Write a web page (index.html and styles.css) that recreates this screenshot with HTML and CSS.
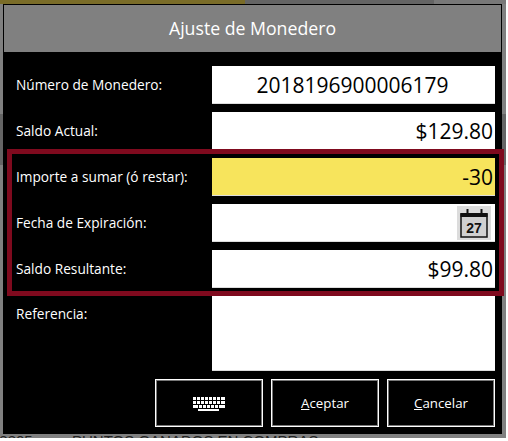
FILE: index.html
```html
<!DOCTYPE html>
<html lang="es">
<head>
  <meta charset="UTF-8" />
  <title>Ajuste de Monedero</title>
  <link rel="stylesheet" href="styles.css">
</head>
<body>
  <div class="screen">
    <div class="top-strip">
      <div class="strip-olive"></div>
      <div class="strip-dark"></div>
      <div class="strip-gray"></div>
    </div>

    <div class="dialog">
      <div class="title">Ajuste de Monedero</div>
      <div class="content">
        <div class="form">
          <label>Número de Monedero:</label>
          <div class="field center">2018196900006179</div>

          <label>Saldo Actual:</label>
          <div class="field">$129.80</div>

          <label>Importe a sumar (ó restar):</label>
          <div class="field yellow">-30</div>

          <label>Fecha de Expiración:</label>
          <div class="field">
            <svg class="calendar" width="34" height="34" viewBox="0 0 34 34">
              <rect width="34" height="34" fill="#dcdcdc"/>
              <rect x="4" y="8" width="26" height="23" fill="#d0d0d0" stroke="#111" stroke-width="1.5"/>
              <rect x="3.5" y="7" width="27" height="4" fill="#111"/>
              <rect x="9.5" y="3" width="2" height="7" fill="#111"/>
              <rect x="23.5" y="3" width="2" height="7" fill="#111"/>
              <text x="17" y="27" text-anchor="middle" class="calendar-day">27</text>
            </svg>
          </div>

          <label>Saldo Resultante:</label>
          <div class="field">$99.80</div>

          <label class="top">Referencia:</label>
          <div class="field notes"></div>
        </div>

        <div class="buttons">
          <button class="btn">
            <svg width="32" height="14" viewBox="0 0 32 14" fill="#fff">
              <path d="M0 0h3v3H0zM4 0h3v3H4zM8 0h3v3H8zM12 0h3v3h-3zM16 0h3v3h-3zM20 0h3v3h-3zM24 0h3v3h-3zM28 0h4v3h-4z"/>
              <path d="M0 4h3v3H0zM4 4h3v3H4zM8 4h3v3H8zM12 4h3v3h-3zM16 4h3v3h-3zM20 4h3v3h-3zM24 4h3v3h-3zM28 4h4v3h-4z"/>
              <path d="M0 8h5v3H0zM6 8h3v3H6zM10 8h3v3h-3zM14 8h3v3h-3zM18 8h3v3h-3zM22 8h3v3h-3zM26 8h6v3h-6z"/>
              <path d="M5 12h21v2H5z"/>
            </svg>
          </button>
          <button class="btn"><u>A</u>ceptar</button>
          <button class="btn"><u>C</u>ancelar</button>
        </div>
      </div>
    </div>

    <div class="behind">
      <span class="behind-code">48805</span>
      <span>PUNTOS GANADOS EN COMPRAS</span>
    </div>

    <div class="highlight"></div>
  </div>
</body>
</html>
```

FILE: styles.css
```css
* {
  margin: 0;
  padding: 0;
  box-sizing: border-box;
}
body {
  background: #fff;
  font-family: 'Open Sans', sans-serif;
}
.screen {
  position: relative;
  width: 506px;
  height: 438px;
  background: linear-gradient(to bottom, #808080 114px, #656565 114px, #656565 165px, #808080 165px);
  overflow: hidden;
}

/* what shows behind the dialog */
.top-strip {
  display: flex;
  height: 4px;
}
.strip-olive {
  width: 245px;
  background: #7a6c28;
}
.strip-dark {
  width: 189px;
  background: #646464;
}
.strip-gray {
  flex: 1;
  background: #787878;
}
.behind {
  display: flex;
  height: 4px;
  font-family: 'Liberation Sans', sans-serif;
  font-size: 15px;
  line-height: 14px;
  color: #222;
  white-space: nowrap;
}
.behind-code {
  width: 81px;
  margin-left: -9px;
}

.dialog {
  width: 499px;
  height: 430px;
  margin-left: 3px;
  border-top: 1px solid #000;
  display: flex;
  flex-direction: column;
}
.title {
  height: 47px;
  background: #808080;
  border-left: 1px solid #000;
  border-right: 1px solid #000;
  color: #fff;
  font-size: 17.7px;
  line-height: 46px;
  text-align: center;
}
.content {
  flex: 1;
  background: #000;
  padding: 14px 7px 7px 13px;
}
.form {
  display: grid;
  grid-template-columns: 196px 283px;
  grid-template-rows: repeat(5, 38px) 75px;
  row-gap: 8px;
}
label {
  color: #fff;
  font-size: 13.7px;
  line-height: 38px;
  white-space: nowrap;
}
label.top {
  line-height: 36px;
}
.field {
  display: flex;
  align-items: center;
  justify-content: flex-end;
  background: #fff;
  border-bottom: 1px solid #ddd;
  padding-right: 2px;
  color: #000;
  font-size: 21px;
}
.field.center {
  justify-content: center;
}
.field.yellow {
  background: #f7e45c;
}
.calendar {
  margin-right: 2px;
}
.calendar-day {
  font-family: 'Liberation Sans', sans-serif;
  font-size: 14px;
  font-weight: bold;
  fill: #111;
}
.buttons {
  display: flex;
  justify-content: flex-end;
  gap: 8px;
  margin-top: 8px;
}
.btn {
  width: 108px;
  height: 48px;
  background: #000;
  border: 1px solid #fff;
  box-shadow: inset 0 0 0 1px #777;
  color: #fff;
  font-family: inherit;
  font-size: 13.3px;
}
.btn svg {
  display: block;
  margin: 1px auto 0;
}

.highlight {
  position: absolute;
  left: 7px;
  top: 149px;
  width: 497px;
  height: 147px;
  border: 5px solid #7f0a1e;
}
```
